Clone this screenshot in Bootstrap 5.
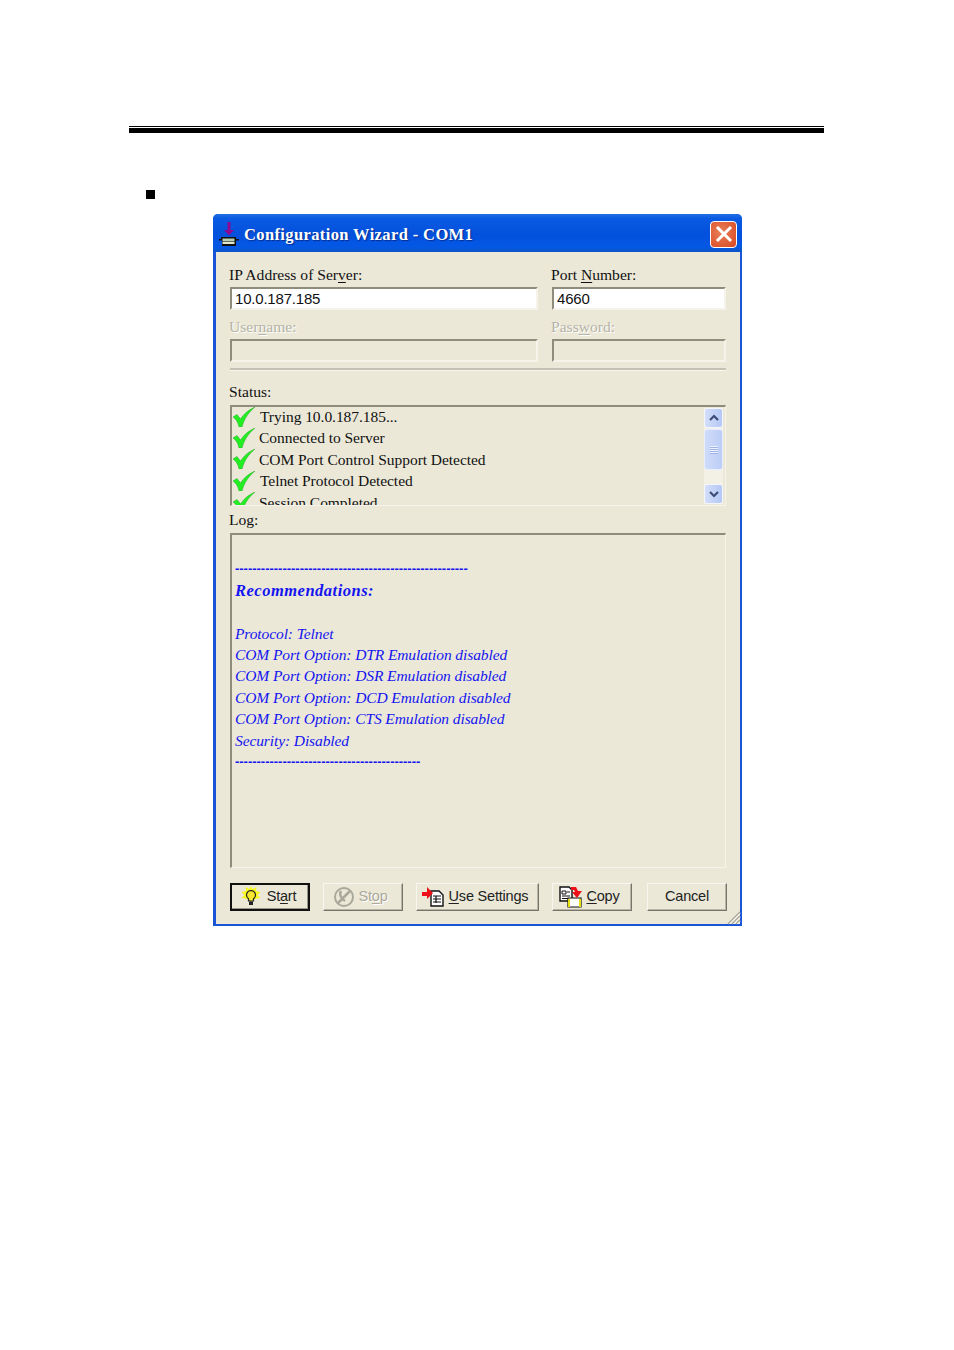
<!DOCTYPE html>
<html lang="en">
<head>
<meta charset="utf-8">
<title>Configuration Wizard</title>
<link href="https://cdn.jsdelivr.net/npm/bootstrap@5.3.0/dist/css/bootstrap.min.css" rel="stylesheet">
<style>
html,body{background:#fff;margin:0}
.pg{width:954px;height:1350px;padding:126px 130px 0 129px;font-family:"Liberation Serif",serif;color:#111}
.top-rule{height:7px;border-top:1px solid #000;border-bottom:5px solid #000;background:#fff}
.sq-row{height:81px;padding:57px 0 0 17px}
.sq{display:block;width:9px;height:9px;background:#000}
.win{width:529px;height:712px;margin-left:84px;background:#ebe8d8;border:solid #1a55d8;border-width:0 2px 2px 3px;border-radius:5px 5px 0 0;position:relative}
.tbar{height:38px;margin:0 -2px 0 -3px;border-radius:5px 5px 0 0;background:linear-gradient(#1f6fe6 0,#0a5ae2 12%,#0350dc 55%,#0458e6 85%,#0a55c8 100%);display:flex;align-items:center;padding:2px 5px 0 5px;color:#fff}
.tbar-title{font-weight:700;font-size:16.5px;letter-spacing:.38px;margin-left:2px;padding-top:2px;text-shadow:1px 1px 1px #0a2c8c;white-space:nowrap;flex:1}
.xbtn{width:27px;height:27px;border:1px solid #fff;border-radius:4px;background:radial-gradient(circle at 40% 40%,#e8805a,#d8461e);display:flex;align-items:center;justify-content:center}
.wbody{padding:12px 14px 0 14px;display:flex;flex-direction:column}
.two{display:flex;gap:14px}
.lf{width:308px}
.rt{width:174px}
.lbl{font-size:15.6px;line-height:22px;height:23px;white-space:nowrap;margin-left:-1px}
.lbl.off{color:#b5b3a6;text-shadow:1px 1px 0 #fff}
.inp{height:23px;border:2px solid;border-color:#8f8c7e #f6f4ea #f6f4ea #8f8c7e;line-height:19px;padding-left:3px;background:#fff;letter-spacing:-.2px;font-family:"Liberation Sans",sans-serif;font-size:15px}
.inp.off{background:#ebe8d8}
.gap1{height:5px;flex:none}
.row2{margin-top:1px}
.sep{height:3px;margin-top:6px;width:496px;background:#c4c1b2;border-bottom:1px solid #f8f6ee}
.stat-l{margin-top:10px;height:24px;line-height:22px}
.statbox{width:496px;height:101px;overflow:hidden;border:solid;border-width:2px 1px 1px 2px;border-color:#8f8c7e #f6f4ea #f6f4ea #8f8c7e;position:relative}
.srow{height:21.4px;display:flex;align-items:center;font-size:15.5px;white-space:nowrap;letter-spacing:-.05px;padding-left:1px}
.srow:first-child{margin-top:-1px}
.srow svg{flex:none;margin-right:4px}
.srow .ind{margin-left:1px}
.sbar{position:absolute;top:1px;right:2px;width:19px;height:96px;background:#f3f1e6;display:flex;flex-direction:column}
.sbtn{width:19px;height:20px;border:1px solid #f4f6ff;border-radius:3px;background:linear-gradient(90deg,#d3def9,#b5c8f5);display:flex;align-items:center;justify-content:center}
.sthumb{height:41px;margin-top:1px;width:19px;border:1px solid #e8eeff;border-radius:3px;background:linear-gradient(90deg,#cfdbf9,#bccdf6);display:flex;align-items:center;justify-content:center}
.log-l{height:27px;line-height:28px}
.logbox{width:496px;height:335px;border:solid;border-width:2px 1px 1px 2px;border-color:#8f8c7e #f6f4ea #f6f4ea #8f8c7e;padding:2px 0 0 3px;color:#1414f0;font-style:italic;font-size:15.5px;white-space:nowrap;overflow:hidden;letter-spacing:-.1px}
.logbox>div{height:21.4px;line-height:21.4px}
.logbox b{font-size:16.5px;letter-spacing:.5px}
.logbox>.dash{font-style:normal;font-weight:700;font-family:"Liberation Sans",sans-serif;font-size:13px;letter-spacing:-.02px}
.btns{display:flex;margin-top:15px;height:28px;position:relative}
.wb{flex:none;height:28px;border:1px solid;border-color:#f8f6ee #77756a #77756a #f8f6ee;box-shadow:inset -1px -1px 0 #b8b5a6;background:#ebe8d8;display:flex;align-items:center;justify-content:center;font-family:"Liberation Sans",sans-serif;font-size:14.5px;letter-spacing:-.2px;color:#222;white-space:nowrap;gap:3px;padding:0 5px 0 0}
.wb.def{border:2px solid #111;box-shadow:inset -1px -1px 0 #9a9788;gap:5px;padding-right:4px}
.wb.off{color:#aaa89a;text-shadow:1px 1px 0 #fff}
.w80{width:80px}.w123{width:123px}
.ml13{margin-left:13px}.ml15{margin-left:15px}
.wb.cxl{padding:0}
.grip{position:absolute;right:-1px;bottom:-1px}
u{text-underline-offset:2px;text-decoration-thickness:1px}
</style>
</head>
<body>
<div class="pg">
  <div class="top-rule"></div>
  <div class="sq-row"><span class="sq"></span></div>
  <div class="win">
    <div class="tbar">
      <svg width="24" height="24" viewBox="0 0 24 24"><path d="M9.500 0h3v8H16l-5 5.500L6 8h3.500z" fill="#8a0a94"/><path d="M3 15h15v2h3v1.500h-3V24H4v-5.500H1V17h2z" fill="#111"/><rect x="4.500" y="16.500" width="12" height="3" fill="#b9cdb4"/><rect x="4.500" y="20" width="12" height="2" fill="#dfe6c9"/></svg>
      <span class="tbar-title">Configuration Wizard - COM1</span>
      <span class="xbtn"><svg width="18" height="18" viewBox="0 0 18 18"><path d="M3 3l12 12M15 3L3 15" stroke="#fff" stroke-width="3" stroke-linecap="square"/></svg></span>
    </div>
    <div class="wbody">
      <div class="two">
        <div class="lf"><div class="lbl">IP Address of Ser<u>v</u>er:</div><div class="inp">10.0.187.185</div></div>
        <div class="rt"><div class="lbl">Port <u>N</u>umber:</div><div class="inp">4660</div></div>
      </div>
      <div class="gap1"></div>
      <div class="two row2">
        <div class="lf"><div class="lbl off">User<u>n</u>ame:</div><div class="inp off"></div></div>
        <div class="rt"><div class="lbl off">Pass<u>w</u>ord:</div><div class="inp off"></div></div>
      </div>
      <div class="sep"></div>
      <div class="lbl stat-l">Status:</div>
      <div class="statbox">
        <div class="srow"><svg width="22" height="20" viewBox="0 0 22 20"><path d="M0 10l4-2.500 3.500 4.500C11 7 15 3 22 0 16 5 11.500 11 9 20H6C5 15 3 12 0 10z" fill="#22ee22" stroke="#0c9a0c" stroke-width=".4"/></svg><span class="ind">Trying 10.0.187.185...</span></div>
        <div class="srow"><svg width="22" height="20" viewBox="0 0 22 20"><path d="M0 10l4-2.500 3.500 4.500C11 7 15 3 22 0 16 5 11.500 11 9 20H6C5 15 3 12 0 10z" fill="#22ee22" stroke="#0c9a0c" stroke-width=".4"/></svg><span>Connected to Server</span></div>
        <div class="srow"><svg width="22" height="20" viewBox="0 0 22 20"><path d="M0 10l4-2.500 3.500 4.500C11 7 15 3 22 0 16 5 11.500 11 9 20H6C5 15 3 12 0 10z" fill="#22ee22" stroke="#0c9a0c" stroke-width=".4"/></svg><span>COM Port Control Support Detected</span></div>
        <div class="srow"><svg width="22" height="20" viewBox="0 0 22 20"><path d="M0 10l4-2.500 3.500 4.500C11 7 15 3 22 0 16 5 11.500 11 9 20H6C5 15 3 12 0 10z" fill="#22ee22" stroke="#0c9a0c" stroke-width=".4"/></svg><span class="ind">Telnet Protocol Detected</span></div>
        <div class="srow"><svg width="22" height="20" viewBox="0 0 22 20"><path d="M0 10l4-2.500 3.500 4.500C11 7 15 3 22 0 16 5 11.500 11 9 20H6C5 15 3 12 0 10z" fill="#22ee22" stroke="#0c9a0c" stroke-width=".4"/></svg><span>Session Completed</span></div>
        <div class="sbar">
          <div class="sbtn"><svg width="12" height="8" viewBox="0 0 12 8"><path d="M2 6l4-4 4 4" fill="none" stroke="#3d4f78" stroke-width="2.200"/></svg></div>
          <div class="sthumb"><svg width="10" height="10" viewBox="0 0 10 10"><path d="M1 1.500h8M1 3.500h8M1 5.500h8M1 7.500h8" stroke="#eef2ff" stroke-width="1"/><path d="M1 2.500h8M1 4.500h8M1 6.500h8M1 8.500h8" stroke="#9fb5ea" stroke-width="1"/></svg></div>
          <div class="flex-grow-1"></div>
          <div class="sbtn"><svg width="12" height="8" viewBox="0 0 12 8"><path d="M2 2l4 4 4-4" fill="none" stroke="#3d4f78" stroke-width="2.200"/></svg></div>
        </div>
      </div>
      <div class="lbl log-l">Log:</div>
      <div class="logbox">
        <div>&nbsp;</div>
        <div class="dash">------------------------------------------------------</div>
        <div><b>Recommendations:</b></div>
        <div>&nbsp;</div>
        <div>Protocol: Telnet</div>
        <div>COM Port Option: DTR Emulation disabled</div>
        <div>COM Port Option: DSR Emulation disabled</div>
        <div>COM Port Option: DCD Emulation disabled</div>
        <div>COM Port Option: CTS Emulation disabled</div>
        <div>Security: Disabled</div>
        <div class="dash">-------------------------------------------</div>
      </div>
      <div class="btns">
        <button type="button" class="wb def w80"><svg width="22" height="22" viewBox="0 0 22 22"><path d="M11 0l1.500 3 4-2-.5 4 4.500 1-3 3 3 3-4 .5L11 15l-5.500-2.500-4-.5 3-3-3-3 4.500-1-.5-4 4 2z" fill="#f8f820"/><path d="M11 4.500a4.500 4.500 0 0 0-2.500 8.200V15h5v-2.300A4.500 4.500 0 0 0 11 4.500z" fill="#f6e830" stroke="#222" stroke-width="1.200"/><path d="M9 15.500h4V19H9z" fill="#222"/></svg><span>St<u>a</u>rt</span></button>
        <button type="button" class="wb off w80 ml13"><svg width="22" height="22" viewBox="0 0 22 22"><circle cx="11" cy="11" r="9" fill="#ebe8d8" stroke="#aaa89a" stroke-width="2"/><path d="M5 17L17 5M8 5c-2 3 0 8 4 10" fill="none" stroke="#aaa89a" stroke-width="2.500"/></svg><span>St<u>o</u>p</span></button>
        <button type="button" class="wb w123 ml13"><svg width="24" height="20" viewBox="0 0 24 20"><path d="M9 4h8l4 4v11H9z" fill="#fff" stroke="#111" stroke-width="1.400"/><path d="M11 9h8M11 12h8M11 15h8M14 9v7" stroke="#111" stroke-width="1.200"/><path d="M0 5h5V0l6 6-6 6V9H0z" fill="#ee1018"/></svg><span><u>U</u>se Settings</span></button>
        <button type="button" class="wb w80 ml13"><svg width="24" height="22" viewBox="0 0 24 22"><path d="M1 1h9l3 3v11H1z" fill="#fff" stroke="#111" stroke-width="1.400"/><path d="M3 5h4v3H3zM3 10h8M3 12.500h8M8 6h3" fill="none" stroke="#111" stroke-width="1"/><path d="M9 12h13v9H9z" fill="#fff" stroke="#111" stroke-width="1.200"/><path d="M10 13v8M21 13v8" stroke="#e6e010" stroke-width="2"/><path d="M12 1h5l2 4h4l-5 7-5-6h3l-1-2h-3z" fill="#ee1018"/></svg><span><u>C</u>opy</span></button>
        <button type="button" class="wb cxl w80 ml15">Cancel</button>
      </div>
    </div>
    <svg class="grip" width="15" height="15" viewBox="0 0 15 15"><path d="M14 2L2 14M14 6L6 14M14 10L10 14" stroke="#a8a596" stroke-width="1.500"/><path d="M14 3.500L3.500 14M14 7.500L7.500 14M14 11.500L11.500 14" stroke="#fff" stroke-width="1"/></svg>
  </div>
</div>
</body>
</html>
